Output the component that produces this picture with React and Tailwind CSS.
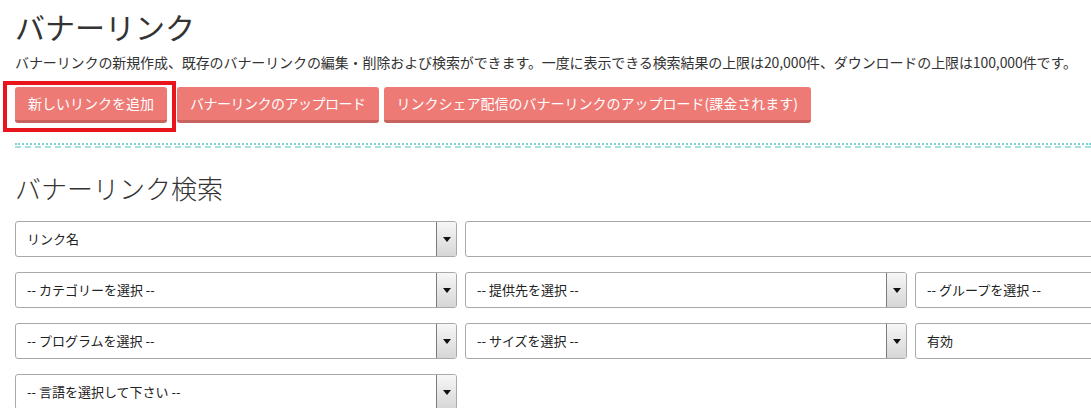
const font = { fontFamily: '"Noto Sans CJK JP", "Liberation Sans", sans-serif' }

function Select({ label }) {
  return (
    <div className="relative flex h-[36px] items-center rounded-[3px] border border-[#a9a9a9] bg-white">
      <span className="pl-[11px] text-[13px] text-[#222]">{label}</span>
      <div className="absolute right-0 top-0 flex h-full w-[20px] items-center justify-center rounded-r-[2px] border-l border-[#7c7c7c] bg-gradient-to-b from-[#f7f7f7] to-[#d6d6d6]">
        <svg width="8" height="5" viewBox="0 0 8 5">
          <path d="M0 0h8L4 5z" fill="#111" />
        </svg>
      </div>
    </div>
  )
}

function Button({ children, className = '' }) {
  return (
    <button className={'h-[36px] rounded-[3px] border-b-[3px] border-[#c7625f] bg-[#ee7a76] px-[13px] text-[14px] text-white ' + className}>
      {children}
    </button>
  )
}

export default function App() {
  return (
    <div className="w-[1091px] h-[408px] overflow-hidden bg-white" style={font}>
      <div className="w-[1400px] px-[15px]">
        <h1 className="pt-[8px] text-[30px] leading-[36px] text-[#333]">バナーリンク</h1>
        <p className="mt-[8px] text-[14px] leading-[20px] tracking-[-0.1px] text-[#333]">
          バナーリンクの新規作成、既存のバナーリンクの編集・削除および検索ができます。一度に表示できる検索結果の上限は20,000件、ダウンロードの上限は100,000件です。
        </p>
        <div className="mt-[15px] flex">
          <div className="relative mr-[10px]">
            <Button>新しいリンクを追加</Button>
            <div className="absolute left-[-12px] top-[-6px] h-[51px] w-[173px] border-4 border-[#e8151d]" />
          </div>
          <Button className="mr-[5px] tracking-[-0.5px]">バナーリンクのアップロード</Button>
          <Button>リンクシェア配信のバナーリンクのアップロード(課金されます)</Button>
        </div>
        <div className="mt-[20px] w-[1076px]">
          <div className="border-t-2 border-dotted border-[#7fd0d0]" />
          <div className="mt-[1px] border-t-2 border-dashed border-[#a8e0e0]" />
        </div>
        <h2 className="mt-[24px] text-[26px] font-light leading-[32px] text-[#333]">バナーリンク検索</h2>
        <div className="mt-[17px] grid w-[1342px] grid-cols-3 gap-x-[8px] gap-y-[15px]">
          <Select label="リンク名" />
          <div className="col-span-2 h-[36px] rounded-[3px] border border-[#a9a9a9] bg-white" />
          <Select label="-- カテゴリーを選択 --" />
          <Select label="-- 提供先を選択 --" />
          <Select label="-- グループを選択 --" />
          <Select label="-- プログラムを選択 --" />
          <Select label="-- サイズを選択 --" />
          <Select label="有効" />
          <Select label="-- 言語を選択して下さい --" />
        </div>
      </div>
    </div>
  )
}
